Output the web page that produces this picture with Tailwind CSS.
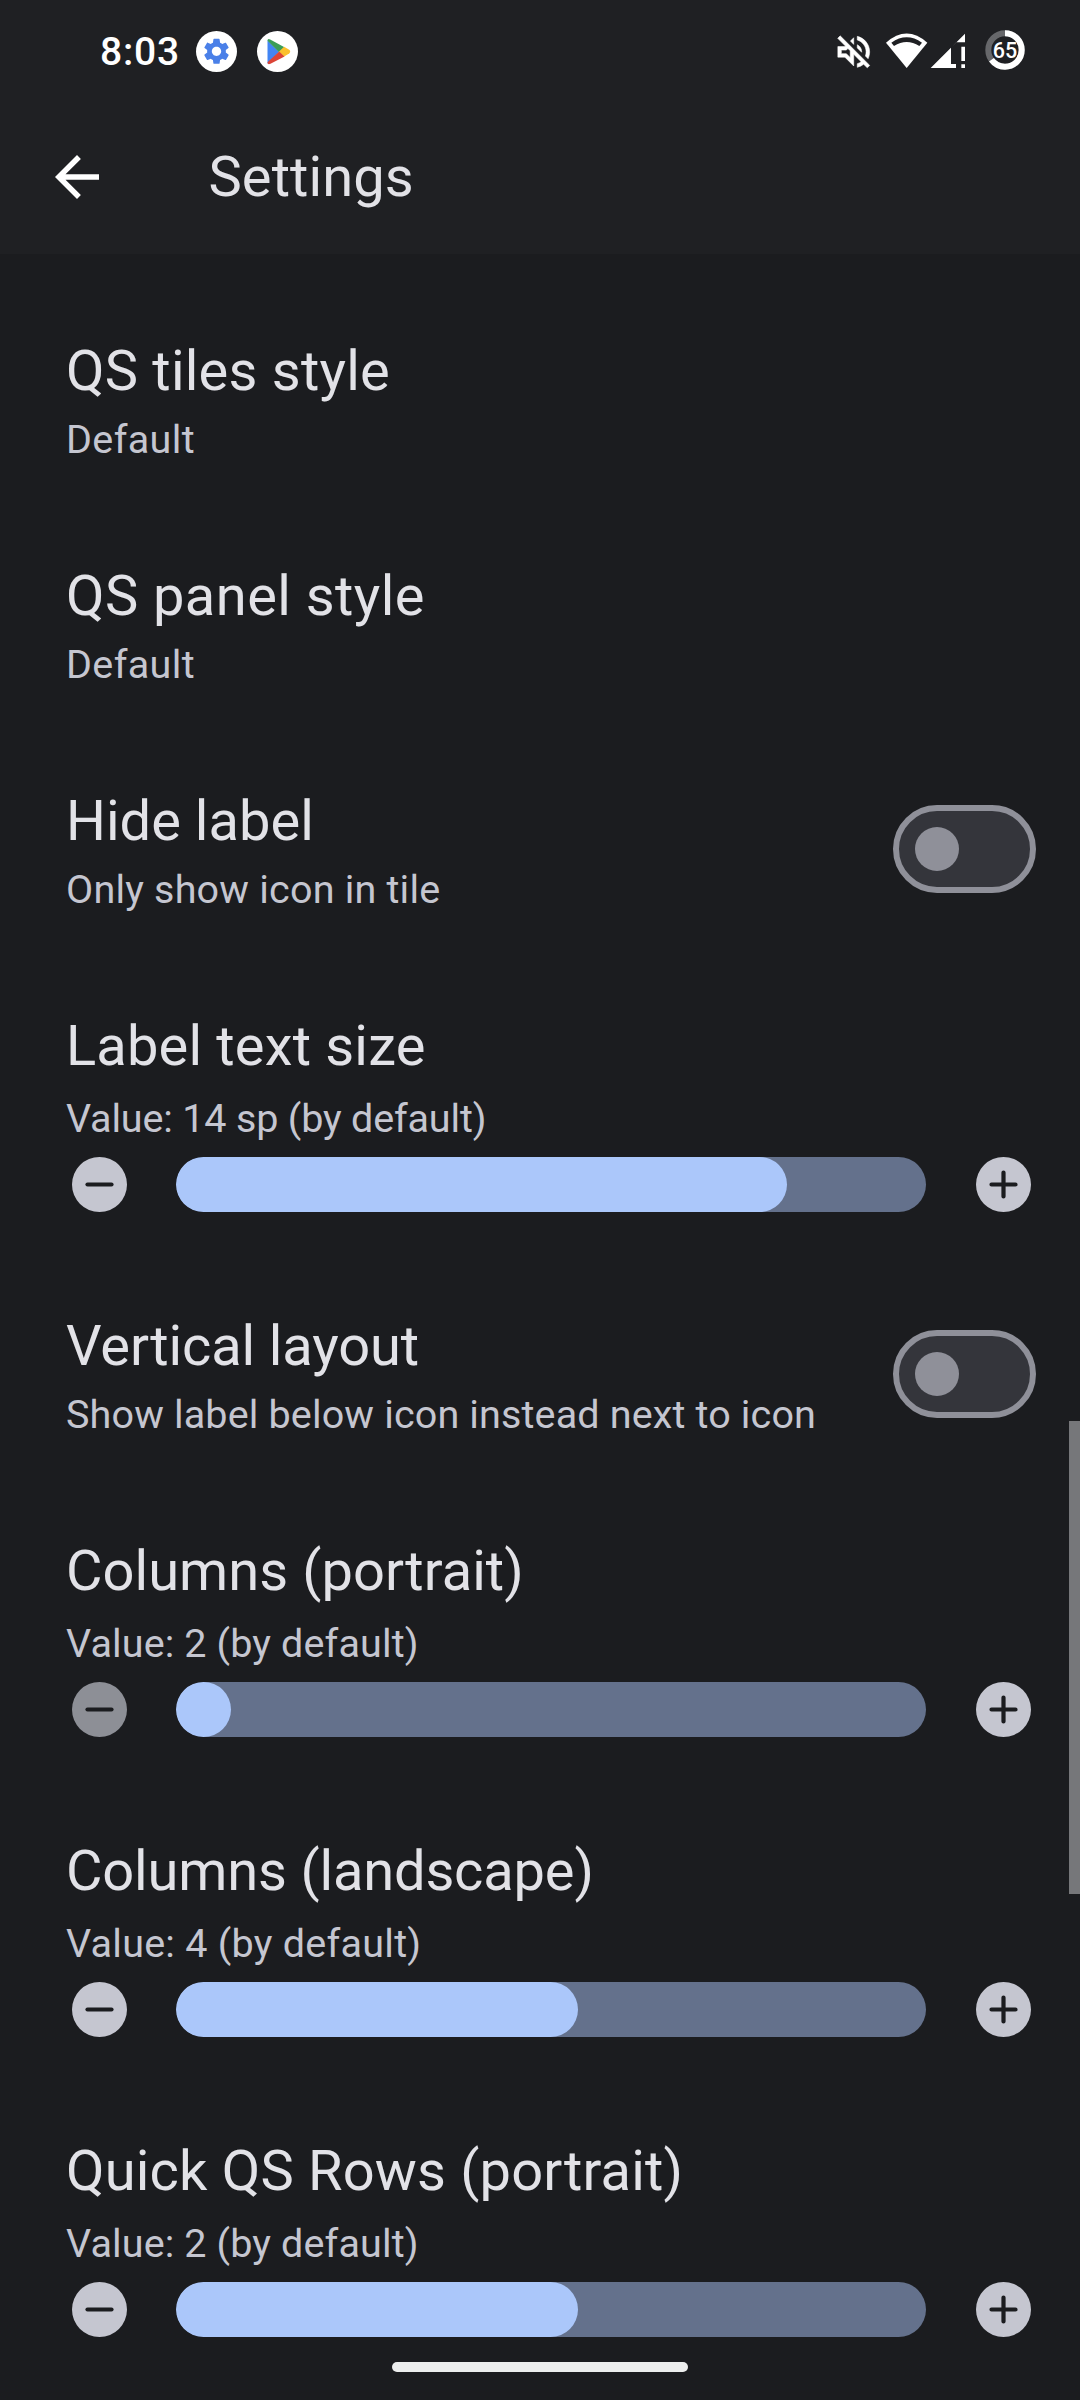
<!DOCTYPE html>
<html lang="en">
<head>
<meta charset="utf-8">
<title>Settings</title>
<script src="https://cdn.jsdelivr.net/npm/@tailwindcss/browser@4"></script>
</head>
<body class="relative flex h-[2400px] w-[1080px] flex-col overflow-hidden bg-[#1b1c1f] font-['Roboto',sans-serif] text-[#e2e2e7]">
<svg class="hidden">
  <symbol id="minus" viewBox="0 0 55 55"><circle cx="27.5" cy="27.5" r="27.5" fill="currentColor"/><path d="M15.5 27.5h24" stroke="#1b1c1f" stroke-width="4.2" stroke-linecap="round"/></symbol>
  <symbol id="plus" viewBox="0 0 55 55"><circle cx="27.5" cy="27.5" r="27.5" fill="currentColor"/><path d="M15.5 27.5h24M27.5 15.5v24" stroke="#1b1c1f" stroke-width="4.2" stroke-linecap="round"/></symbol>
</svg>

<header class="h-[254px] shrink-0 bg-[#1f2023]">
  <!-- status bar -->
  <div class="flex h-[103px] items-center justify-between pr-[55px] pl-[100px] text-white">
    <div class="flex items-center">
      <span class="w-[96px] text-[39px] leading-[52px] font-medium tracking-[0.8px]">8:03</span>
      <svg class="h-[41px] w-[41px]" viewBox="347.500 62.500 123 123"><circle cx="409" cy="124" r="61.5" fill="#fff"/><path transform="translate(362.2 76.700) scale(3.9)" fill="#4a80e8" d="M19.14 12.94c.04-.3.06-.61.06-.94 0-.32-.02-.64-.07-.94l2.03-1.58c.18-.14.23-.41.12-.61l-1.92-3.32c-.12-.22-.37-.29-.59-.22l-2.39.96c-.5-.38-1.03-.7-1.62-.94l-.36-2.54c-.04-.24-.24-.41-.48-.41h-3.84c-.24 0-.43.17-.47.41l-.36 2.54c-.59.24-1.13.57-1.62.94l-2.39-.96c-.22-.08-.47 0-.59.22L2.74 8.87c-.12.21-.08.47.12.61l2.03 1.58c-.05.3-.09.63-.09.94s.02.64.07.94l-2.03 1.58c-.18.14-.23.41-.12.61l1.92 3.32c.12.22.37.29.59.22l2.39-.96c.5.38 1.03.7 1.62.94l.36 2.54c.05.24.24.41.48.41h3.84c.24 0 .44-.17.47-.41l.36-2.54c.59-.24 1.13-.56 1.62-.94l2.39.96c.22.08.47 0 .59-.22l1.92-3.32c.12-.22.07-.47-.12-.61l-2.01-1.58zM12 15.6c-1.98 0-3.6-1.62-3.6-3.6s1.62-3.6 3.6-3.6 3.6 1.62 3.6 3.6-1.62 3.6-3.6 3.6z"/></svg>
      <svg class="ml-5 h-[41px] w-[41px]" viewBox="530.500 62.500 123 123"><circle cx="592" cy="124" r="61.500" fill="#fff"/><path d="M562 90L597 125L562 161Z" fill="#4285f4"/><path d="M562 92Q562 84 570 88L613 111L597 126Z" fill="#3a9d57"/><path d="M612 110L627 119Q633 124 627 130L612 139L596 125Z" fill="#fbc02d"/><path d="M562 156L597 124L613 139L571 161Q562 165 562 156Z" fill="#db4437"/></svg>
    </div>
    <div class="flex items-center">
      <svg class="h-[41px] w-[38px]" viewBox="45 63 114 123"><path transform="translate(37.600 62) scale(5.3)" fill="#fff" stroke="#fff" stroke-width=".3" d="M4.34 2.93L2.93 4.34 7.29 8.7 7 9H3v6h4l5 5v-6.59l4.18 4.18c-.65.49-1.38.88-2.18 1.11v2.06a8.94 8.94 0 003.61-1.75l2.05 2.05 1.41-1.41L4.34 2.93zM10 15.17L7.83 13H5v-2h2.83l.88-.88L10 11.41v3.76zM19 12c0 .82-.15 1.61-.41 2.34l1.53 1.53c.56-1.17.88-2.48.88-3.87 0-4.28-2.99-7.86-7-8.77v2.06c2.89.86 5 3.54 5 6.71zM12 4l-1.880 1.880L12 7.760V4zm4.500 8A4.500 4.500 0 0014 7.970v1.790l2.480 2.480c.01-.08.02-.16.02-.24z"/></svg>
      <svg class="ml-[11px] h-[41px] w-[45px]" viewBox="192 63 135 123"><path d="M260 174L198 98Q260 43 322 98Z" fill="#fff"/><path d="M214 98Q260 66 306 98L298 108Q260 84 222 108Z" fill="#1f2023"/></svg>
      <svg class="h-[41px] w-[38px]" viewBox="327 63 114 123"><path d="M332 174L435 71V97H409L393 113V162H408V174ZM424 110h11v43h-11zM424 163h11v11h-11z" fill="#fff"/></svg>
      <div class="relative -mt-[3px] ml-[18px] grid h-[40px] w-[40px] place-items-center">
        <svg class="absolute inset-0" viewBox="0 0 40 40" fill="none" stroke-width="6"><circle cx="20" cy="20" r="16.700" stroke="#66676a"/><circle cx="20" cy="20" r="16.700" stroke="#fff" stroke-dasharray="65 35" pathLength="100" transform="rotate(-90 20 20)"/></svg>
        <span class="relative top-px text-[21.5px] leading-none font-medium">65</span>
      </div>
    </div>
  </div>
  <!-- toolbar -->
  <div class="flex h-[148px] items-center pl-[44px]">
    <svg class="h-[66px] w-[66px]" viewBox="0 0 24 24"><path fill="#fff" d="M20 11H7.830l5.590-5.590L12 4l-8 8 8 8 1.410-1.410L7.830 13H20v-2z"/></svg>
    <h1 class="ml-[98.5px] text-[56px] leading-[70px] tracking-[0.1px]">Settings</h1>
  </div>
</header>

<main class="flex flex-col pt-8 pl-[66px]">
  <section class="h-[225px] pt-[50px]">
    <h2 class="text-[56px] leading-[70px] tracking-[0.23px]">QS tiles style</h2>
    <p class="mt-2 text-[39.5px] leading-[52px] tracking-[0.38px] text-[#c5c6d0]">Default</p>
  </section>
  <section class="h-[225px] pt-[50px]">
    <h2 class="text-[56px] leading-[70px] tracking-[0.44px]">QS panel style</h2>
    <p class="mt-2 text-[39.5px] leading-[52px] tracking-[0.38px] text-[#c5c6d0]">Default</p>
  </section>
  <section class="flex h-[225px] items-center justify-between pr-11">
    <div class="pt-[5px]">
      <h2 class="text-[56px] leading-[70px] tracking-[0.02px]">Hide label</h2>
      <p class="mt-2 text-[39.5px] leading-[52px] tracking-[0.2px] text-[#c5c6d0]">Only show icon in tile</p>
    </div>
    <div class="flex h-[88px] w-[143px] items-center rounded-full border-[6px] border-[#8f9099] bg-[#34353b] pl-4"><div class="h-11 w-11 rounded-full bg-[#8f9099]"></div></div>
  </section>
  <section class="h-[300px] pt-[50px]">
    <h2 class="text-[56px] leading-[70px] tracking-[0.18px]">Label text size</h2>
    <p class="mt-3 text-[39.5px] leading-[52px] tracking-[-0.17px] text-[#c5c6d0]">Value: 14 sp (by default)</p>
    <div class="mt-3 flex items-center pl-[5.5px] text-[#c5c6d0]">
      <svg class="h-[55px] w-[55px]"><use href="#minus"/></svg>
      <div class="mr-[49.5px] ml-[49.5px] h-[55px] w-[750px] overflow-hidden rounded-full bg-[#64718c]"><div class="h-full rounded-full bg-[#abc7fa]" style="width:611px"></div></div>
      <svg class="h-[55px] w-[55px]"><use href="#plus"/></svg>
    </div>
  </section>
  <section class="flex h-[225px] items-center justify-between pr-11">
    <div class="pt-[5px]">
      <h2 class="text-[56px] leading-[70px] tracking-[-0.1px]">Vertical layout</h2>
      <p class="mt-2 text-[39.5px] leading-[52px] tracking-[0.15px] text-[#c5c6d0]">Show label below icon instead next to icon</p>
    </div>
    <div class="flex h-[88px] w-[143px] items-center rounded-full border-[6px] border-[#8f9099] bg-[#34353b] pl-4"><div class="h-11 w-11 rounded-full bg-[#8f9099]"></div></div>
  </section>
  <section class="h-[300px] pt-[50px]">
    <h2 class="text-[56px] leading-[70px] tracking-[0.06px]">Columns (portrait)</h2>
    <p class="mt-3 text-[39.5px] leading-[52px] tracking-[0.13px] text-[#c5c6d0]">Value: 2 (by default)</p>
    <div class="mt-3 flex items-center pl-[5.5px] text-[#c5c6d0]">
      <svg class="h-[55px] w-[55px] text-[#8d8f96]"><use href="#minus"/></svg>
      <div class="mr-[49.5px] ml-[49.5px] h-[55px] w-[750px] overflow-hidden rounded-full bg-[#64718c]"><div class="h-full rounded-full bg-[#abc7fa]" style="width:55px"></div></div>
      <svg class="h-[55px] w-[55px]"><use href="#plus"/></svg>
    </div>
  </section>
  <section class="h-[300px] pt-[50px]">
    <h2 class="text-[56px] leading-[70px] tracking-[-0.16px]">Columns (landscape)</h2>
    <p class="mt-3 text-[39.5px] leading-[52px] tracking-[0.26px] text-[#c5c6d0]">Value: 4 (by default)</p>
    <div class="mt-3 flex items-center pl-[5.5px] text-[#c5c6d0]">
      <svg class="h-[55px] w-[55px]"><use href="#minus"/></svg>
      <div class="mr-[49.5px] ml-[49.5px] h-[55px] w-[750px] overflow-hidden rounded-full bg-[#64718c]"><div class="h-full rounded-full bg-[#abc7fa]" style="width:402px"></div></div>
      <svg class="h-[55px] w-[55px]"><use href="#plus"/></svg>
    </div>
  </section>
  <section class="h-[300px] pt-[50px]">
    <h2 class="text-[56px] leading-[70px] tracking-[0.19px]">Quick QS Rows (portrait)</h2>
    <p class="mt-3 text-[39.5px] leading-[52px] tracking-[0.13px] text-[#c5c6d0]">Value: 2 (by default)</p>
    <div class="mt-3 flex items-center pl-[5.5px] text-[#c5c6d0]">
      <svg class="h-[55px] w-[55px]"><use href="#minus"/></svg>
      <div class="mr-[49.5px] ml-[49.5px] h-[55px] w-[750px] overflow-hidden rounded-full bg-[#64718c]"><div class="h-full rounded-full bg-[#abc7fa]" style="width:402px"></div></div>
      <svg class="h-[55px] w-[55px]"><use href="#plus"/></svg>
    </div>
  </section>
</main>

<!-- scrollbar thumb and navigation handle float over the list -->
<div class="absolute top-[1421px] right-0 h-[473px] w-[11px] bg-[#76777a]"></div>
<div class="absolute bottom-7 left-[392px] h-[10px] w-[296px] rounded-full bg-[#edeeee]"></div>
</body>
</html>
